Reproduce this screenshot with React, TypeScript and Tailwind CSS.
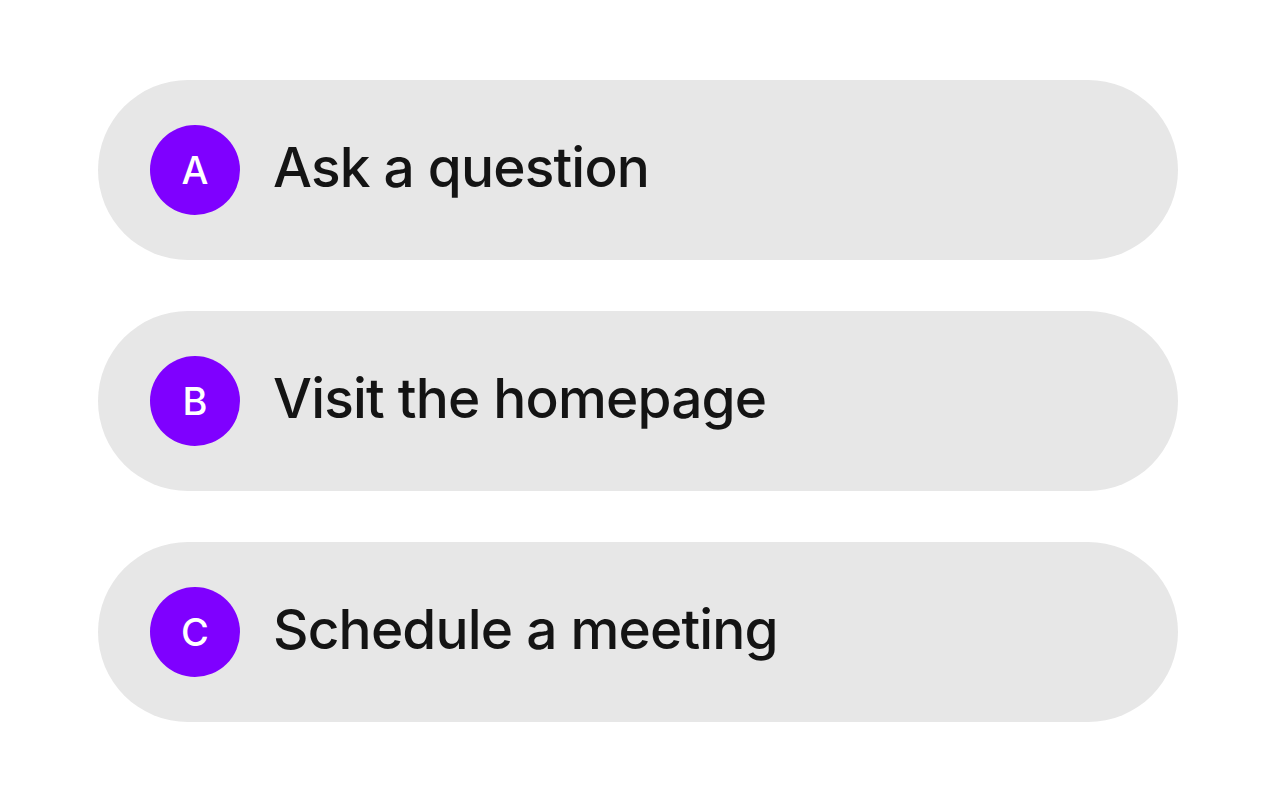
const options = [
  { key: "A", label: "Ask a question" },
  { key: "B", label: "Visit the homepage" },
  { key: "C", label: "Schedule a meeting" },
];

export default function App() {
  return (
    <div className="min-h-screen bg-white pt-[80px] pl-[98px] font-['Inter',sans-serif]">
      <div className="flex w-[1080px] flex-col gap-[51px]">
        {options.map((o) => (
          <div
            key={o.key}
            className="flex h-[180px] items-center gap-[33px] rounded-full bg-[#e7e7e7] pl-[52px]"
          >
            <div className="flex h-[90px] w-[90px] shrink-0 items-center justify-center rounded-full bg-[#7f00ff] text-[38px] font-medium text-white">
              {o.key}
            </div>
            <span className="-mt-[6px] text-[55px] font-medium tracking-[-0.015em] text-[#141414]">
              {o.label}
            </span>
          </div>
        ))}
      </div>
    </div>
  );
}
